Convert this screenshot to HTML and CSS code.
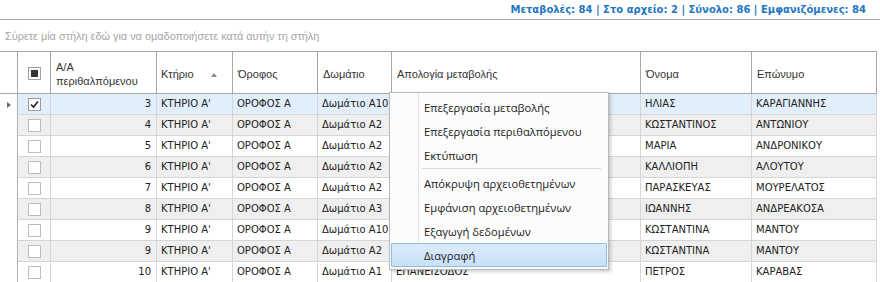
FILE: index.html
```html
<!DOCTYPE html>
<html>
<head>
<meta charset="utf-8">
<link rel="stylesheet" href="styles.css">
</head>
<body>
<div class="page">
  <div class="status">Μεταβολές: 84 | Στο αρχείο: 2 | Σύνολο: 86 | Εμφανιζόμενες: 84</div>
  <div class="grouppanel">Σύρετε μία στήλη εδώ για να ομαδοποιήσετε κατά αυτήν τη στήλη</div>
  <div class="grid">
    <div class="row head">
      <div class="c ind"></div>
      <div class="c chk"><span class="box indet"><span></span></span></div>
      <div class="c">A/A<br>περιθαλπόμενου</div>
      <div class="c sort">Κτήριο<span class="arrow"></span></div>
      <div class="c">Όροφος</div>
      <div class="c">Δωμάτιο</div>
      <div class="c">Απολογία μεταβολής</div>
      <div class="c">Όνομα</div>
      <div class="c">Επώνυμο</div>
    </div>
    <div class="row sel">
      <div class="c ind"><span class="tri"></span></div>
      <div class="c chk"><span class="box checked"><svg width="11" height="11" viewBox="0 0 11 11"><path d="M2 5.5 L4.5 8 L9 2.5" fill="none" stroke="#222" stroke-width="1.6"/></svg></span></div>
      <div class="c num">3</div><div class="c">ΚΤΗΡΙΟ Α'</div><div class="c">ΟΡΟΦΟΣ Α</div><div class="c">Δωμάτιο A10</div><div class="c"></div><div class="c">ΗΛΙΑΣ</div><div class="c">ΚΑΡΑΓΙΑΝΝΗΣ</div>
    </div>
    <div class="row alt">
      <div class="c ind"></div><div class="c chk"><span class="box"></span></div>
      <div class="c num">4</div><div class="c">ΚΤΗΡΙΟ Α'</div><div class="c">ΟΡΟΦΟΣ Α</div><div class="c">Δωμάτιο A2</div><div class="c"></div><div class="c">ΚΩΣΤΑΝΤΙΝΟΣ</div><div class="c">ΑΝΤΩΝΙΟΥ</div>
    </div>
    <div class="row">
      <div class="c ind"></div><div class="c chk"><span class="box"></span></div>
      <div class="c num">5</div><div class="c">ΚΤΗΡΙΟ Α'</div><div class="c">ΟΡΟΦΟΣ Α</div><div class="c">Δωμάτιο A2</div><div class="c"></div><div class="c">ΜΑΡΙΑ</div><div class="c">ΑΝΔΡΟΝΙΚΟΥ</div>
    </div>
    <div class="row alt">
      <div class="c ind"></div><div class="c chk"><span class="box"></span></div>
      <div class="c num">6</div><div class="c">ΚΤΗΡΙΟ Α'</div><div class="c">ΟΡΟΦΟΣ Α</div><div class="c">Δωμάτιο A2</div><div class="c"></div><div class="c">ΚΑΛΛΙΟΠΗ</div><div class="c">ΑΛΟΥΤΟΥ</div>
    </div>
    <div class="row">
      <div class="c ind"></div><div class="c chk"><span class="box"></span></div>
      <div class="c num">7</div><div class="c">ΚΤΗΡΙΟ Α'</div><div class="c">ΟΡΟΦΟΣ Α</div><div class="c">Δωμάτιο A2</div><div class="c"></div><div class="c">ΠΑΡΑΣΚΕΥΑΣ</div><div class="c">ΜΟΥΡΕΛΑΤΟΣ</div>
    </div>
    <div class="row alt">
      <div class="c ind"></div><div class="c chk"><span class="box"></span></div>
      <div class="c num">8</div><div class="c">ΚΤΗΡΙΟ Α'</div><div class="c">ΟΡΟΦΟΣ Α</div><div class="c">Δωμάτιο A3</div><div class="c"></div><div class="c">ΙΩΑΝΝΗΣ</div><div class="c">ΑΝΔΡΕΑΚΟΣΑ</div>
    </div>
    <div class="row">
      <div class="c ind"></div><div class="c chk"><span class="box"></span></div>
      <div class="c num">9</div><div class="c">ΚΤΗΡΙΟ Α'</div><div class="c">ΟΡΟΦΟΣ Α</div><div class="c">Δωμάτιο A10</div><div class="c"></div><div class="c">ΚΩΣΤΑΝΤΙΝΑ</div><div class="c">ΜΑΝΤΟΥ</div>
    </div>
    <div class="row alt">
      <div class="c ind"></div><div class="c chk"><span class="box"></span></div>
      <div class="c num">9</div><div class="c">ΚΤΗΡΙΟ Α'</div><div class="c">ΟΡΟΦΟΣ Α</div><div class="c">Δωμάτιο A2</div><div class="c"></div><div class="c">ΚΩΣΤΑΝΤΙΝΑ</div><div class="c">ΜΑΝΤΟΥ</div>
    </div>
    <div class="row">
      <div class="c ind"></div><div class="c chk"><span class="box"></span></div>
      <div class="c num">10</div><div class="c">ΚΤΗΡΙΟ Α'</div><div class="c">ΟΡΟΦΟΣ Α</div><div class="c">Δωμάτιο A1</div><div class="c">ΕΠΑΝΕΙΣΟΔΟΣ</div><div class="c">ΠΕΤΡΟΣ</div><div class="c">ΚΑΡΑΒΑΣ</div>
    </div>
  </div>
  <div class="menu">
    <div class="mi">Επεξεργασία μεταβολής</div>
    <div class="mi">Επεξεργασία περιθαλπόμενου</div>
    <div class="mi">Εκτύπωση</div>
    <div class="msep"></div>
    <div class="mi">Απόκρυψη αρχειοθετημένων</div>
    <div class="mi">Εμφάνιση αρχειοθετημένων</div>
    <div class="mi">Εξαγωγή δεδομένων</div>
    <div class="mi hot">Διαγραφή</div>
  </div>
</div>
</body>
</html>
```

FILE: styles.css
```css
html, body { margin: 0; padding: 0; background: #fff; }
.page { position: relative; width: 880px; height: 282px; overflow: hidden; }

.status {
  height: 19px;
  border-bottom: 1px solid #a8a8a8;
  box-sizing: content-box;
  font-family: "DejaVu Sans", sans-serif;
  font-weight: bold;
  font-size: 10px;
  line-height: 19px;
  color: #2476c2;
  text-align: right;
  padding-right: 14px;
  white-space: nowrap;
}

.grouppanel {
  height: 31px;
  line-height: 33px;
  padding-left: 5px;
  font-family: "Liberation Sans", sans-serif;
  font-size: 10.9px;
  color: #a6a6a6;
  white-space: nowrap;
}

.grid {
  width: 877px;
  border-top: 1px solid #a8a8a8;
  font-family: "DejaVu Sans", sans-serif;
  font-size: 10px;
  color: #222;
}

.row {
  display: grid;
  grid-template-columns: 18px 33px 106px 76px 85px 74px 249px 111px 125px;
  height: 21px;
}

.c {
  box-sizing: border-box;
  border-right: 1px solid #d6d6d6;
  border-bottom: 1px solid #d6d6d6;
  padding: 0 4px;
  line-height: 20px;
  white-space: nowrap;
  overflow: hidden;
  position: relative;
}
.c.ind { border-bottom: none; border-right: 1px solid #b0b0b0; padding: 0; display: flex; align-items: center; justify-content: center; background: #fff; }
.c.chk { display: flex; align-items: center; justify-content: center; padding: 0; }
.c.num { text-align: right; padding-right: 5px; }

.row.alt .c { background: #efefef; }
.row.sel .c { background: #e1eefb; }
.row .c.ind { background: #fff; }

.row.head { height: 42px; }
.row.head .c {
  font-family: "Liberation Sans", sans-serif;
  font-size: 11px;
  color: #333;
  line-height: 14px;
  display: flex;
  align-items: center;
  border-right-color: #a8a8a8;
  border-bottom-color: #a8a8a8;
  padding: 2px 5px 0 5px;
  background: #fff;
}
.row.head .c.ind { border-bottom: 1px solid #a8a8a8; }
.row.head .c.chk { justify-content: center; padding: 2px 0 0 0; }
.row.head .c.sort { padding-left: 4px; }
.arrow {
  position: absolute;
  left: 54px;
  top: 21px;
  width: 0; height: 0;
  border-left: 3.5px solid transparent;
  border-right: 3.5px solid transparent;
  border-bottom: 4px solid #8a8a8a;
}

.box {
  width: 11px; height: 11px;
  border: 1px solid #bdbdbd;
  background: #fff;
  display: flex; align-items: center; justify-content: center;
}
.box.checked { border-color: #9a9a9a; }
.box.checked svg { display: block; }
.box.indet { border-color: #a0a0a0; }
.box.indet span { width: 7px; height: 7px; background: #333; }

.tri {
  width: 0; height: 0;
  border-top: 3.5px solid transparent;
  border-bottom: 3.5px solid transparent;
  border-left: 4px solid #6b6b6b;
}

.menu {
  position: absolute;
  left: 389px;
  top: 92px;
  width: 220px;
  height: 178px;
  box-sizing: border-box;
  border: 1px solid #b9b9b9;
  background: #fcfcfc linear-gradient(to right, transparent 28px, #e2e2e2 28px, #e2e2e2 29px, #ffffff 29px, #ffffff 30px, transparent 30px) no-repeat 0 0 / 100% 150px;
  box-shadow: 2px 2px 3px rgba(0,0,0,0.18);
  padding: 2px 1px;
  font-family: "Open Sans", sans-serif;
  font-size: 11.2px;
  color: #1a1a1a;
}
.mi {
  height: 24px;
  line-height: 25px;
  padding-left: 33px;
  box-sizing: border-box;
  white-space: nowrap;
}
.msep {
  height: 4px;
  margin-left: 31px;
  margin-right: 6px;
  background: linear-gradient(#fcfcfc 1px, #d7d7d7 1px, #d7d7d7 2px, #fcfcfc 2px);
}
.mi.hot {
  border: 1px solid #8ebbe7;
  background: linear-gradient(#dcebfa, #c9e0f6);
  line-height: 23px;
  padding-left: 32px;
  border-radius: 1px;
}
```
